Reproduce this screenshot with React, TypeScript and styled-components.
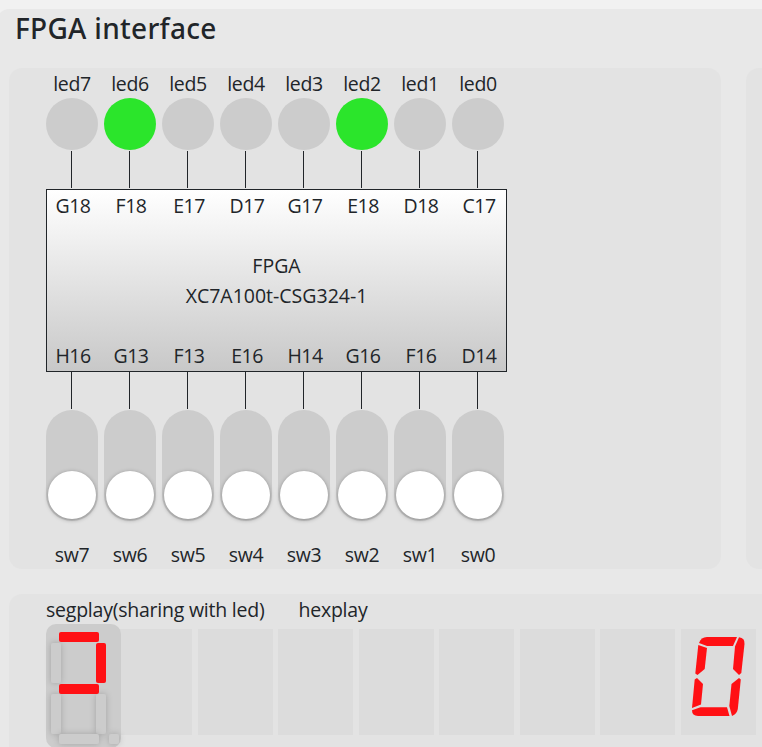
import React from "react";
import styled, { createGlobalStyle } from "styled-components";

const GlobalStyle = createGlobalStyle`
  * { box-sizing: border-box; }
  html, body { margin: 0; }
  body {
    background: #f1f1f1;
    color: #212529;
    font-family: "Open Sans", "Noto Sans", sans-serif;
    font-size: 19.5px;
    font-weight: 400;
    line-height: 30px;
    letter-spacing: -0.23px;
    overflow: hidden;
  }
`;

const Page = styled.main`
  height: 747px;
  padding-top: 9px;
  overflow: hidden;
`;

const Card = styled.section`
  width: 1200px;
  height: 800px;
  margin-left: -3px;
  padding-left: 12px;
  border-radius: 12px;
  background: #e8e8e8;
`;

const Title = styled.h1`
  margin: 0;
  height: 59px;
  padding-left: 6px;
  font-family: "Noto Sans", "Open Sans", sans-serif;
  font-size: 28px;
  font-weight: 500;
  line-height: 38px;
  letter-spacing: 0.3px;
`;

const Panels = styled.div`
  display: flex;
  gap: 25px;
`;

const Panel = styled.div<{ $width: number; $height: number }>`
  width: ${(p) => p.$width}px;
  height: ${(p) => p.$height}px;
  padding-left: 37px;
  border-radius: 13px;
  background: #e3e3e3;
`;

const PinRow = styled.div`
  display: grid;
  grid-template-columns: repeat(8, 52px);
  column-gap: 6px;
`;

const PinColumn = styled.div`
  display: flex;
  flex-direction: column;
  align-items: center;
`;

const Label = styled.span`
  height: 30px;
  text-align: center;
  white-space: nowrap;
  letter-spacing: -0.35px;
`;

const LedLabel = styled(Label)`
  padding-top: 1px;
`;

const PinLabel = styled(Label)<{ $drop?: boolean }>`
  padding-top: ${(p) => (p.$drop ? 1 : 0)}px;
  letter-spacing: -0.5px;
`;

const Led = styled.div<{ $on: boolean }>`
  width: 52px;
  height: 52px;
  border-radius: 50%;
  background: ${(p) => (p.$on ? "#2be52b" : "#ccc")};
`;

const Wire = styled.div<{ $top: number }>`
  width: 1px;
  height: 37px;
  margin: ${(p) => p.$top}px 1px 1px 0;
  background: #212529;
`;

const Chip = styled.div`
  display: flex;
  flex-direction: column;
  justify-content: space-between;
  width: 461px;
  height: 183px;
  border: 1px solid #212529;
  background: linear-gradient(#fff, #c8c8c8);
`;

const ChipName = styled.div`
  text-align: center;
  letter-spacing: 0;
`;

const Track = styled.div`
  display: flex;
  align-items: flex-end;
  width: 52px;
  height: 111px;
  padding: 2px;
  border-radius: 26px;
  background: #ccc;
`;

const Knob = styled.div`
  width: 48px;
  height: 48px;
  border-radius: 50%;
  background: #fff;
  box-shadow: 0 1px 4px rgba(0, 0, 0, 0.35);
`;

const SwitchLabel = styled(Label)`
  margin-top: 19px;
`;

const DisplayPanel = styled(Panel)`
  margin-top: 25px;
`;

const Captions = styled.div`
  display: flex;
  height: 30px;
  gap: 34px;
  padding-top: 1px;
`;

const Displays = styled.div`
  display: flex;
`;

const SegmentBox = styled.div`
  flex: none;
  width: 75px;
  height: 124px;
  border-radius: 10px;
  background: #ccc;
  z-index: 1;
`;

const SegmentArt = styled.svg`
  display: block;
  overflow: visible;
`;

const SegmentRect = styled.rect<{ $on: boolean }>`
  fill: ${(p) => (p.$on ? "#ff1014" : "#ccc")};
  filter: ${(p) => (p.$on ? "none" : "drop-shadow(0 0 3px rgba(0, 0, 0, 0.2))")};
`;

const HexRow = styled.div`
  display: flex;
  gap: 5.5px;
  margin: 5px 0 0 -4px;
`;

const HexCell = styled.div`
  flex: none;
  width: 75px;
  height: 106px;
  background: #dcdcdc;
`;

const leds = [
  { id: 7, pin: "G18", on: false },
  { id: 6, pin: "F18", on: true },
  { id: 5, pin: "E17", on: false },
  { id: 4, pin: "D17", on: false },
  { id: 3, pin: "G17", on: false },
  { id: 2, pin: "E18", on: true },
  { id: 1, pin: "D18", on: false },
  { id: 0, pin: "C17", on: false },
];

const switches = [
  { id: 7, pin: "H16" },
  { id: 6, pin: "G13" },
  { id: 5, pin: "F13" },
  { id: 4, pin: "E16" },
  { id: 3, pin: "H14" },
  { id: 2, pin: "G16" },
  { id: 1, pin: "F16" },
  { id: 0, pin: "D14" },
];

const segments = [
  { x: 5, y: 19, w: 10, h: 40, on: false },
  { x: 5, y: 70, w: 10, h: 40, on: false },
  { x: 50, y: 70, w: 10, h: 40, on: false },
  { x: 13, y: 110, w: 40, h: 10, on: false },
  { x: 63, y: 110, w: 10, h: 10, on: false },
  { x: 13, y: 8, w: 40, h: 10, on: true },
  { x: 50, y: 19, w: 10, h: 40, on: true },
  { x: 13, y: 60, w: 40, h: 10, on: true },
];

function SevenSegment() {
  return (
    <SegmentBox>
      <SegmentArt width="75" height="124" viewBox="0 0 75 124">
        {segments.map((s, i) => (
          <SegmentRect key={i} x={s.x} y={s.y} width={s.w} height={s.h} rx="2" $on={s.on} />
        ))}
      </SegmentArt>
    </SegmentBox>
  );
}

function HexZero() {
  return (
    <SegmentArt width="75" height="106" viewBox="0 0 75 106" fill="#ff1014">
      <path d="M18 14 Q20 8 26 8 H56 L52 17 H26 Z" />
      <path d="M58 8.3 Q64 9 63.5 15 L60.3 44 L58 46 L52 40 L54 17.5 Z" />
      <path d="M17.3 16 L26 19 L23.7 40 L16.5 46 L14.3 44.5 Z" />
      <path d="M16 49 L22 55 L20 75.5 L11 79 L13.7 50.5 Z" />
      <path d="M58 49 L59.8 50.5 L56.8 80 Q56 85 51 87 L48.3 77 L50.5 55 Z" />
      <path d="M11 81.3 L19.5 78.3 H46 L48.5 87 H17 Q11 87 11 81.3 Z" />
    </SegmentArt>
  );
}

export default function App() {
  return (
    <Page>
      <GlobalStyle />
      <Card>
        <Title>FPGA interface</Title>
        <Panels>
          <Panel $width={712} $height={501}>
            <PinRow>
              {leds.map((l) => (
                <PinColumn key={l.id}>
                  <LedLabel>led{l.id}</LedLabel>
                  <Led $on={l.on} />
                  <Wire $top={1} />
                </PinColumn>
              ))}
            </PinRow>
            <Chip>
              <PinRow>
                {leds.map((l) => (
                  <PinLabel key={l.id} $drop>
                    {l.pin}
                  </PinLabel>
                ))}
              </PinRow>
              <ChipName>
                <div>FPGA</div>
                <div>XC7A100t-CSG324-1</div>
              </ChipName>
              <PinRow>
                {switches.map((s) => (
                  <PinLabel key={s.id}>{s.pin}</PinLabel>
                ))}
              </PinRow>
            </Chip>
            <PinRow>
              {switches.map((s) => (
                <PinColumn key={s.id}>
                  <Wire $top={0} />
                  <Track>
                    <Knob />
                  </Track>
                  <SwitchLabel>sw{s.id}</SwitchLabel>
                </PinColumn>
              ))}
            </PinRow>
          </Panel>
          <Panel $width={400} $height={501} />
        </Panels>
        <DisplayPanel $width={1150} $height={200}>
          <Captions>
            <span>segplay(sharing with led)</span>
            <span>hexplay</span>
          </Captions>
          <Displays>
            <SevenSegment />
            <HexRow>
              {Array.from({ length: 8 }, (_, i) => (
                <HexCell key={i}>{i === 7 && <HexZero />}</HexCell>
              ))}
            </HexRow>
          </Displays>
        </DisplayPanel>
      </Card>
    </Page>
  );
}
